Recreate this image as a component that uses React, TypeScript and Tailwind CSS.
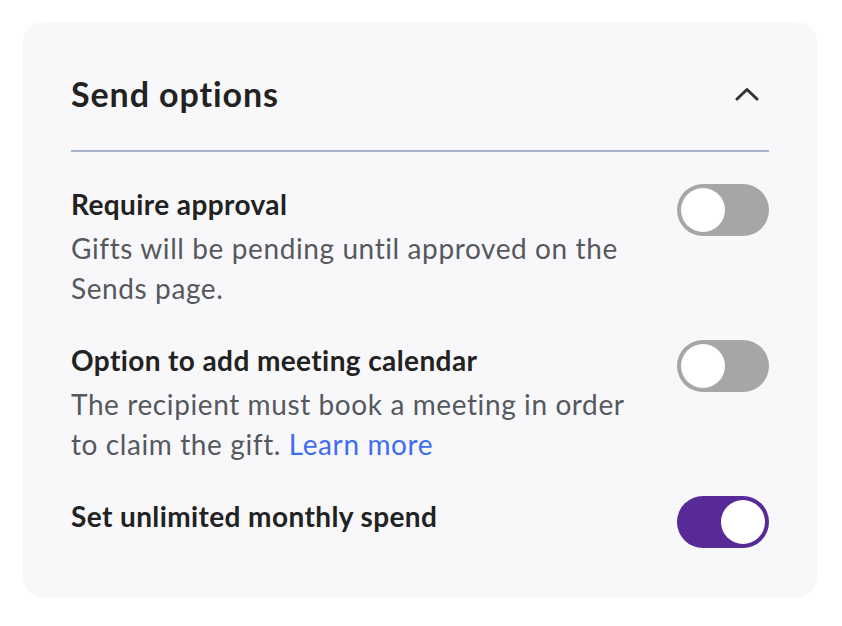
import React, { useState } from 'react';

type Option = {
    id: string;
    title: string;
    desc?: string;
    link?: string;
    on: boolean;
};

const initialOptions: Option[] = [
    {
        id: 'approval',
        title: 'Require approval',
        desc: 'Gifts will be pending until approved on the Sends page.',
        on: false,
    },
    {
        id: 'calendar',
        title: 'Option to add meeting calendar',
        desc: 'The recipient must book a meeting in order to claim the gift.',
        link: 'Learn more',
        on: false,
    },
    {
        id: 'spend',
        title: 'Set unlimited monthly spend',
        on: true,
    },
];

function Toggle({ on, onClick }: { on: boolean; onClick: () => void }) {
    return (
        <button
            type="button"
            onClick={onClick}
            className={`flex h-[52px] w-[92px] shrink-0 items-center rounded-full p-[4px] ${on ? 'justify-end bg-[#572a98]' : 'justify-start bg-[#a6a6a6]'}`}
        >
            <span className="block h-[44px] w-[44px] rounded-full bg-white" />
        </button>
    );
}

export default function App() {
    const [options, setOptions] = useState(initialOptions);
    const [open, setOpen] = useState(true);

    const flip = (id: string) =>
        setOptions((prev) => prev.map((o) => (o.id === id ? { ...o, on: !o.on } : o)));

    return (
        <div className="min-h-[626px] bg-white pl-[23px] pt-[22px] font-['Lato','Liberation_Sans',sans-serif]">
            <section className="w-[794px] rounded-[20px] bg-[#f8f8fa] px-12 pt-[52px] pb-[49px]">
                {/* Header */}
                <div className="flex h-10 items-center justify-between">
                    <h2 className="text-[34px] leading-10 font-bold text-[#222] tracking-[0.9px]">Send options</h2>
                    <button type="button" onClick={() => setOpen(!open)} className="mr-[6px] flex h-8 w-8 items-center justify-center">
                        <svg width="24" height="15" viewBox="0 0 24 15" fill="none">
                            <polyline points="2,12 12,2.5 22,12" stroke="#333" strokeWidth="3" strokeLinecap="round" strokeLinejoin="round" />
                        </svg>
                    </button>
                </div>
                <div className="mt-[36px] h-[2px] bg-[#a9b4c8]" />

                {/* Options */}
                <div className="flex flex-col gap-[32px] pt-[32px]">
                    {options.map((o) => (
                        <div key={o.id} className="flex items-start justify-between">
                            <div className="max-w-[560px]">
                                <div className="text-[28px] leading-10 font-bold text-[#222] tracking-[0.4px]">{o.title}</div>
                                {o.desc && (
                                    <p className="mt-[4px] text-[28px] leading-10 text-[#55595e] tracking-[0.6px]">
                                        {o.desc}
                                        {o.link && (
                                            <>
                                                {' '}
                                                <a href="#" className="text-[#3f6df2]">{o.link}</a>
                                            </>
                                        )}
                                    </p>
                                )}
                            </div>
                            <Toggle on={o.on} onClick={() => flip(o.id)} />
                        </div>
                    ))}
                </div>
            </section>
        </div>
    );
}
